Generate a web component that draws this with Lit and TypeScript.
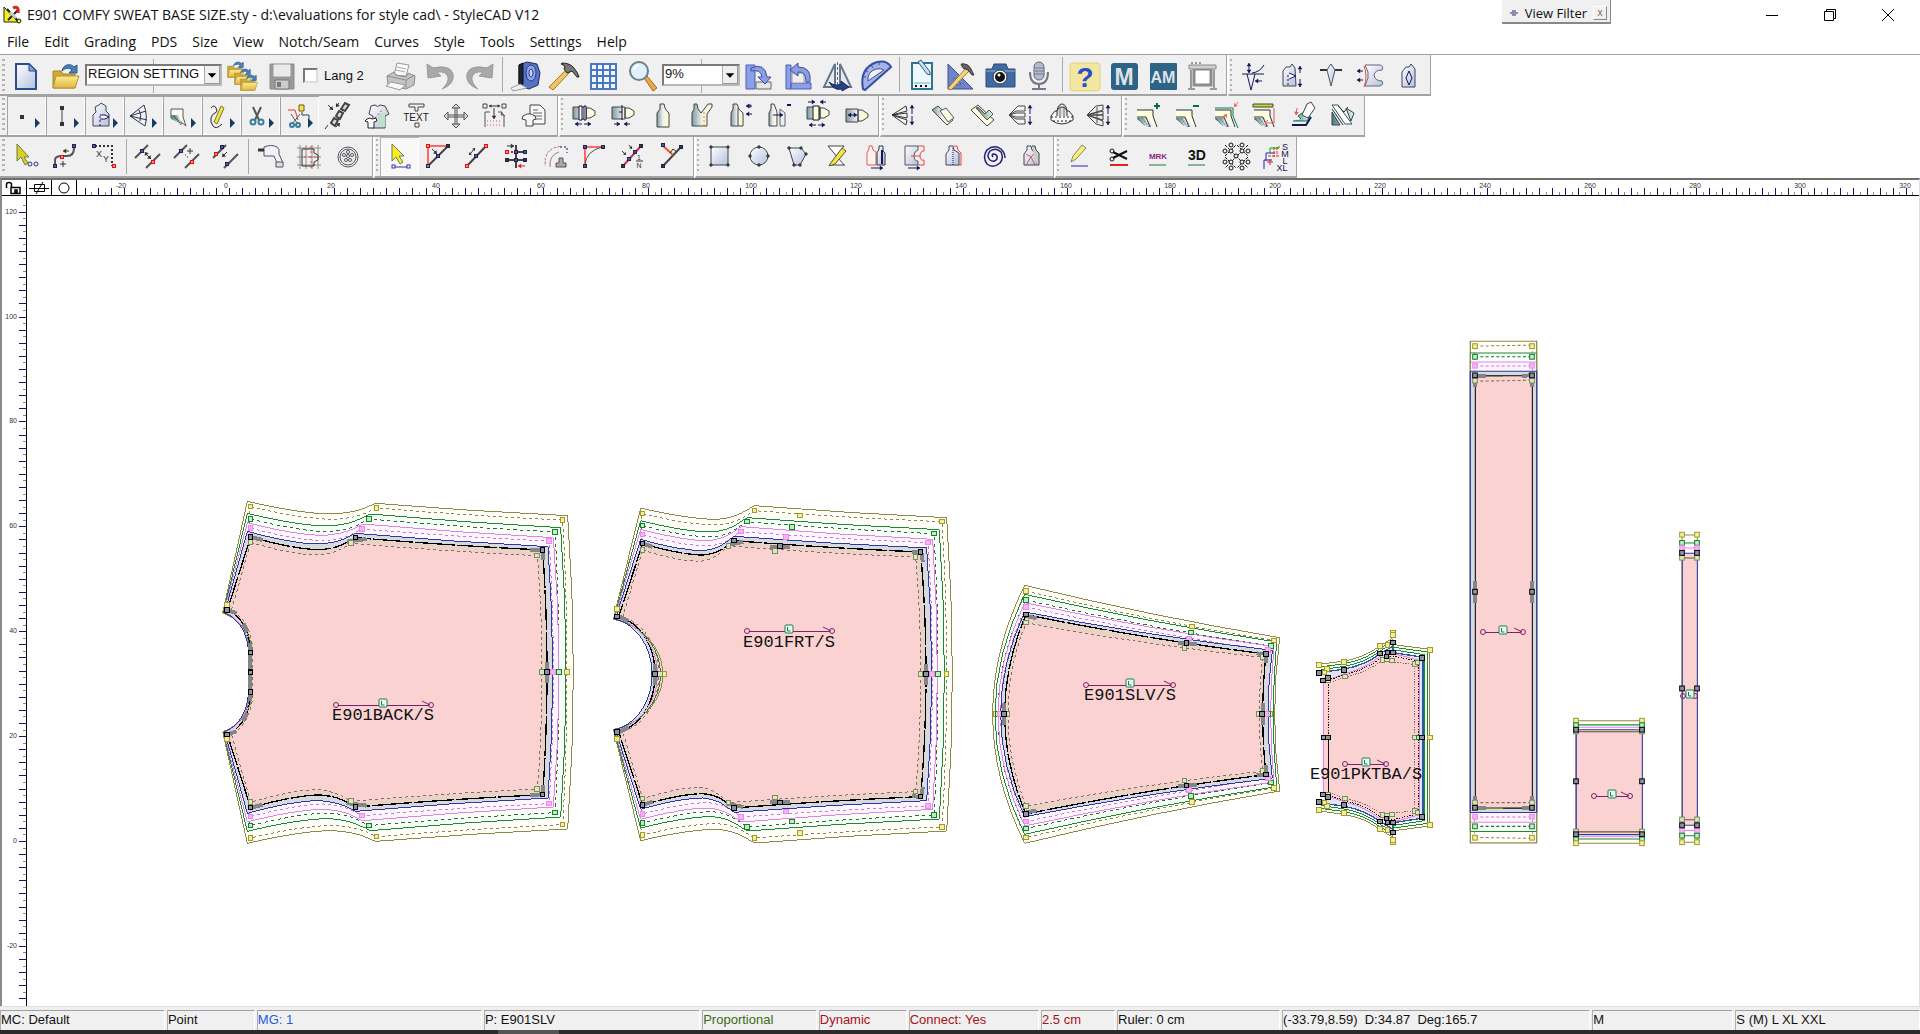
import { LitElement, html, svg, css } from "lit";
import { customElement, property } from "lit/decorators.js";

type Art = unknown;
const NAVY = "#14145a";
const INK = "#333";

/* ---------- small drawing helpers for the 39 x 39 tool icons ---------- */

const P = (d: string, stroke = INK, fill = "none", w = 1): Art =>
  svg`<path d=${d} stroke=${stroke} fill=${fill} stroke-width=${w}></path>`;

const D = (d: string, stroke = INK, dash = "2 2", w = 1): Art =>
  svg`<path d=${d} stroke=${stroke} fill="none" stroke-width=${w} stroke-dasharray=${dash}></path>`;

const arrow = (x1: number, y1: number, x2: number, y2: number, c = NAVY, s = 4): Art => {
  const a = Math.atan2(y2 - y1, x2 - x1);
  const pt = (t: number) => `${x2 - s * Math.cos(a + t)} ${y2 - s * Math.sin(a + t)}`;
  return svg`<path d="M${x1} ${y1}L${x2} ${y2}" stroke=${c} fill="none"></path>
    <path d="M${x2} ${y2}L${pt(0.65)}L${pt(-0.65)}Z" fill=${c}></path>`;
};

const sq = (x: number, y: number, c = "#4a5ab0"): Art =>
  svg`<rect x=${x - 1.5} y=${y - 1.5} width="3" height="3" fill=${c} stroke="#22224a"></rect>`;
const rsq = (x: number, y: number): Art =>
  svg`<rect x=${x - 1.5} y=${y - 1.5} width="3" height="3" fill="#f88" stroke="#d11"></rect>`;
const T = (x: number, y: number, s: string, size: number, c: string, w = "400"): Art =>
  svg`<text x=${x} y=${y} font-size=${size} fill=${c} font-weight=${w} text-anchor="middle">${s}</text>`;

const drop = svg`<path d="M28 22v10l5-5z" fill="#153a66"></path>`;
const folder = (x: number, y: number, k: number): Art => svg`<g transform="translate(${x} ${y}) scale(${k})">
  <path d="M1 8h8l2 3h12v14H1z" fill="#cfa93a" stroke="#a98626"></path>
  <path d="M1 25l3-12h23l-4 12z" fill="url(#gold)" stroke="#b7922b"></path>
  <path d="M10 8c1-7 9-8 12-4l3-2v8h-8l3-3c-3-3-7-2-10 1z" fill="#4a7fb8" stroke="#2c5c92"></path></g>`;
const vest = "M14 31V17l3-4V8h4l1 4q1 3 4 5v14z";
const pleat = "M8 11h13v12H8zM21 12h4l5 3v4l-5 3h-4z";
const seam = (extra: Art): Art => svg`
  ${P("M8 14h16v6l5 12-6-5-4-5H8z", "none", "#ffffdc")}
  ${P("M8 22h8l4 10-6-4-6-5z", "none", "url(#teal)")}
  ${P("M8 14h16v6l4 11M8 21h9l4 10", "#234")}${D("M9 23l7 7M13 22l7 9M17 22l5 9", "#456", "1 1")}${extra}`;

const ICONS: Record<string, Art> = {
  new: svg`${P("M9 8h13l7 7v18H9z", "#2d4d8c", "url(#page)", 2)}${P("M22 8v7h7z", "#2d4d8c", "#7ba0e0")}`,
  open: folder(6, 7, 1),
  openMany: svg`${folder(3, 5, 0.65)}${folder(10, 12, 0.65)}${folder(16, 18, 0.65)}`,
  save: svg`${P("M7 8h24v25H7z", "#8d8d8d", "#999")}${P("M11 9h16v11H11z", "#eee", "#e9e9e9")}${P("M12 24h14v9H12z", "#777", "#ccc")}<rect x="14" y="26" width="4" height="5" fill="#777"></rect>`,
  print: svg`${P("M12 19l3-12 12 2-3 11z", "#999", "#fafafa")}${P("M15 11l9 2M14 14l9 2", "#aaa")}${P("M5 20l7-4 2 3 10 2 2-4 7 3-1 9-8 4-18-4z", "#8c8c8c", "#c4c4c4")}${P("M5 20l19 4v8M24 24l9-5", "#8c8c8c")}${P("M4 30l5-4 14 3-5 5z", "#999", "#fafafa")}`,
  undo: P("M6 8l1 14 13-2-4-4q9-1 11 5 1 6-6 12 13-5 11-15Q29 8 12 12z", "#999", "#a8a8a8"),
  redo: P("M33 8l-1 14-13-2 4-4q-9-1-11 5-1 6 6 12Q5 28 7 18 10 8 27 12z", "#999", "#a8a8a8"),
  tape: svg`${P("M13 9l8-3 10 2 3 9-2 12-9 4-10-3z", "#1f2f66", "#5572c4")}${P("M13 9l4-2v21l-4 2z", "#111", "#223")}<ellipse cx="25" cy="17" rx="5" ry="8" fill="#8ea4e4" stroke="#2a3d86"></ellipse><ellipse cx="25" cy="17" rx="2" ry="4" fill="#c9d4f6" stroke="#2a3d86"></ellipse>${P("M14 28l-9 4 2 3 14-3z", "#99a", "#eee")}`,
  hammer: svg`${P("M22 13l3 3L8 34l-4-3z", "#a87820", "#f0c468")}${P("M17 7q8 0 12 5t5 9l-2 0-5-6-5 2-3-4 1-3-4-2z", "#222", "#777")}`,
  grid: svg`${P("M7 8h25v25H7z", "#3d68b0", "#f2f6ff")}${P("M7 14h25M7 20h25M7 27h25M13 8v25M19 8v25M26 8v25M7 8h25v25H7z", "#4a78c0", "none", 2)}`,
  zoom: svg`${P("M21 22l3-2 10 12-4 3z", "#a66c1c", "#e8a848")}<circle cx="16" cy="15" r="9" fill="#dff1fb" stroke="#6b7f8c" stroke-width="2"></circle>${P("M11 14q1-4 5-5", "#fff", "none", 2)}`,
  rotR: svg`${P("M6 9h9v24H6z", "#4b5fae", "#8aa0ea")}${P("M16 26h15v7H16z", "#666", "#e4e4e4")}${P("M11 12q14-6 16 9h4l-6 7-7-7h4q-1-8-11-6z", "#3b4f9e", "#8a9ee8")}`,
  rotL: svg`${P("M7 9h5v24H7z", "#4b5fae", "#8aa0ea")}${P("M12 27h20v6H12z", "#4b5fae", "#8aa0ea")}${P("M13 17h12v10H13z", "#999", "#eee")}${P("M31 26q2-15-12-15V7l-8 7 8 6v-4q8-1 8 10z", "#3b4f9e", "#8a9ee8")}`,
  flip: svg`${P("M17 8v23H6z", "#667788", "#e4eaf0", 2)}${P("M22 8v23h11z", "#667788", "#e4eaf0", 2)}${D("M19.500 6v28", "#4a6a9a", "3 2")}${P("M11 26q6 5 12 2v-3l8 6-7 4v-2q-8 2-13-7z", "#142a66", "#2a4088")}`,
  protractor: svg`${P("M6 33Q2 12 20 6q10-2 14 5L8 34z", "#3b4f9e", "#a3b2ea", 2)}${P("M11 25q-1-9 8-12 5-1 8 1z", "#3b4f9e", "#f0f0f0")}${P("M6 21l3 0M8 14l3 2M14 9l2 3M22 6v3", "#3b4f9e")}`,
  notes: svg`${P("M9 7h20v26H9z", "#2f7392", "#eef8fc", 2)}${P("M11 27h16", "#7ab")}${P("M12 30h2m3 0h2m3 0h2", "#111", "none", 2)}${P("M15 6l3-2 9 12v3l-3-1z", "#335577", "#c4e4f0")}`,
  draft: svg`${P("M6 8v25h25z", "#3c4f86", "#6c84c8", 1)}${P("M12 22v6h7z", "#3c4f86", "#f0f0f0")}${P("M6 32l3 2 18-19-3-3z", "#a87820", "#f0d488")}${P("M19 8q7-1 10 5t3 6h-2l-4-5-5-2z", "#333", "#666")}`,
  camera: svg`${P("M5 13h6l2-5h12l2 5h7v18H5z", "#2a4a76", "#3f6ba4")}${P("M5 15h29", "#9ab")}<circle cx="19" cy="21" r="7" fill="#fff" stroke="#223344"></circle><circle cx="19" cy="21" r="5" fill="#111"></circle><circle cx="18" cy="19" r="1.500" fill="#fff"></circle>`,
  mic: svg`<rect x="14" y="6" width="10" height="18" rx="5" fill="#b4bbd0" stroke="#666677"></rect>${P("M15 12h9M15 15h9M15 18h9", "#778")}${P("M10 16q0 12 9 12t9-12M19 28v5M12 33h14", "#778", "none", 2)}`,
  help: svg`<rect x="4" y="7" width="30" height="28" rx="3" fill="#f3e6a2" stroke="#e0d080"></rect>${T(19, 31, "?", 28, "#2a50c8", "700")}`,
  m: svg`<rect x="6" y="7" width="27" height="27" rx="3" fill="#2d6486"></rect>${T(19, 29, "M", 23, "#dfe3e6", "700")}`,
  am: svg`<rect x="6" y="7" width="27" height="27" rx="1" fill="#2d6486"></rect>${T(19, 27, "AM", 16, "#dfe3e6", "700")}`,
  plot: svg`${P("M11 13h17v16H11z", "#8c8c8c", "#fff", 3)}${P("M6 9h27v4H6z", "#8a8a8a", "#d0d0d0", 1)}${P("M8 14v18m23-18v18M5 33h7m15 0h7M8 7h2m2 0h2m2 0h2", "#9a9a9a", "none", 2)}`,

  dart1: svg`${P("M8 18h22M13 18l4 16 4-16", NAVY)}${P("M18 17q8-1 12-8", NAVY)}${arrow(15, 12, 15, 7)}${arrow(15, 12, 15, 17)}${arrow(28, 25, 21, 25)}`,
  dart2: svg`${P("M10 30V15l3-4h4l2-3 3 4 1 18z", "#445", "url(#page)")}${P("M16 17l7 3-7 3", NAVY, "#fff")}${D("M15 19v12", NAVY)}${arrow(27, 17, 27, 10)}${arrow(27, 23, 27, 31)}`,
  dart3: svg`${P("M8 14h22", "#333", "none", 2)}${P("M15 14l4 16 4-16-4-6z", "#556", "url(#page)")}`,
  dart4: svg`${P("M14 9h15q4 1 2 5-7 0-8 5 1 6 8 6 2 4-2 5H14l3-8v-6z", "#667", "url(#page)")}${P("M13 10q4 10 0 21", "#e44")}${arrow(12, 15, 6, 15)}${arrow(12, 24, 6, 24)}`,
  dart5: svg`${P("M12 31V16l4-5h3l2-3 4 5v18z", "#445", "url(#page)")}${P("M19 15l3 7-3 7-3-7z", NAVY)}`,

  point: svg`<rect x="13" y="19" width="4" height="4" fill="#333"></rect>${drop}`,
  line: svg`${P("M16 12v17", "#444", "none", 1)}<rect x="14" y="10" width="4" height="4" fill="#333"></rect><rect x="14" y="26" width="4" height="4" fill="#333"></rect>${drop}`,
  piece: svg`${P("M8 30V19l3-3-1-5 4-2 2-2 5 3v5l3 3v12z", "#445", "url(#page)")}${P("M15 19h5l4 2-4 2h-5", NAVY, "#fff")}${D("M15 20v10", NAVY)}${drop}`,
  fanDrop: svg`${P("M6 20L20 9q4 11 1 21zM6 20l16-5M6 20l17 4M15 14q3 5 1 11", "#334", "#eef2fa")}${drop}`,
  seamDrop: svg`${P("M8 13h12v8l3 9-6-5-9-3z", "#556", "#fbfbe8")}${P("M8 19h7l4 9-11-5z", "none", "url(#teal)")}${D("M11 20l8 9", "#345", "1 1", 2)}${drop}`,
  sketch: svg`${P("M9 12q3-4 5 0t-1 5-4 5 2 8 9-2", "#222")}${P("M12 26l7-16 3 2-7 16z", "#773", "#f3e63c")}${drop}`,
  cut: svg`${P("M12 11l6 13M20 11l-6 13", "#555", "none", 2)}<circle cx="12" cy="26" r="2.500" fill="none" stroke="#3a7d9c" stroke-width="2"></circle><circle cx="20" cy="26" r="2.500" fill="none" stroke="#3a7d9c" stroke-width="2"></circle>${drop}`,
  cutJoin: svg`${P("M8 14h7l3 10", "#e33")}${P("M11 18l6 9M20 18l-7 9", "#555")}<circle cx="12" cy="29" r="2" fill="none" stroke="#3a7d9c" stroke-width="2"></circle><circle cx="18" cy="29" r="2" fill="none" stroke="#3a7d9c" stroke-width="2"></circle>${P("M19 9h5v6h-5z", "#752", "#f3e63c")}${P("M22 16v3h7v4", "#345")}${drop}`,
  chain: svg`${P("M12 27l3-5 4 2-3 6zM17 20l3-5 4 2-3 6zM22 13l4-6 4 2-4 6z", "#444", "#ddd", 2)}${arrow(9, 9, 14, 14, INK)}${arrow(20, 7, 17, 11, INK)}${arrow(17, 31, 21, 27, INK)}${P("M9 29l-3 4", INK)}`,
  shirt: svg`${P("M13 10l4-1q3 3 5 0l5 1 4 8-4 2v12H15V20l-4-2z", "#445", "url(#page)")}${P("M20 31V19l7-3v15z", "none", "#bfe0cc")}${D("M17 22l8-9", "#e33")}${P("M9 23l3-1 2 1 4-1 1 3-3 1v6H10v-6l-3-1z", "#222", "#fff")}`,
  text: svg`${P("M12 8h15v3h-6v4h-3v-4h-6z", "#444")}${T(19, 25, "TEXT", 10, "#222")}${P("M18 27h4v4h-4z", "#444")}`,
  move: svg`${P("M10 19h20v2H10zM19 10h2v20h-2z", "#555", "#eee")}${P("M12 16l-4 4 4 4zM28 16l4 4-4 4zM16 12l4-4 4 4zM16 28l4 4 4-4z", "#555", "#ddd")}`,
  distribute: svg`${P("M8 8h4v4H8zM27 8h4v4h-4z", "#444")}${arrow(19, 10, 14, 10, INK, 3)}${arrow(19, 10, 25, 10, INK, 3)}${arrow(19, 12, 19, 23, INK)}${P("M10 31V16h5m8 0h4l-1 3h3v12M26 16l4 4", "#555")}${D("M12 25h14M12 29h14", "#e55", "1 2")}`,
  copyDoc: svg`${P("M16 9h10l5 5v14H16z", "#444", "#f8f8f8")}${P("M19 14h5m-5 3h9m-9 3h9m-9 3h9", "#666")}${P("M9 20l4-2h4l4 2 1 3-3 1v6h-7v-6l-4-1z", "#444", "#f8f8f8")}`,

  full1: svg`${P(pleat, "#444", "url(#mix)")}${P("M14 10h3v14h-3zM19 10h2v14h-2z", "#113", "#fff")}${arrow(17, 28, 10, 28)}${arrow(19, 28, 26, 28)}`,
  full2: svg`${P(pleat, "#444", "url(#mix)")}${P("M18 9v15M15 16h3", "#113", "none", 1)}${arrow(10, 28, 16, 28)}${arrow(26, 28, 20, 28)}`,
  vest1: P(vest, "#444", "url(#mix)"),
  vest2: svg`${P("M10 30V17l2-4V8h3l1 5 3 4 4-5 3-4h4v3l-5 7v12z", "#444", "url(#mix)")}${D("M22 16v14", "#e80")}`,
  vest3: svg`${P("M10 30V17l2-4V8h4q1 6 6 9v13z", "#444", "url(#mix)")}${P("M17 12v18", "#345")}${arrow(31, 10, 25, 10)}${arrow(31, 18, 25, 18)}${P("M29 8v4", NAVY)}`,
  vest4: svg`${P("M9 30V17l2-4V8h3l3 8v14z", "#444", "url(#mix)")}${P("M20 30V13l5 4v13z", "#567", "#eee")}${arrow(13, 19, 23, 19)}${P("M27 9h4", NAVY, "none", 2)}`,
  full3: svg`${P(pleat, "#444", "url(#mix)")}${P("M14 10h6v14h-6z", "#113", "#ffffd8")}${arrow(9, 6, 16, 6)}${arrow(27, 6, 21, 6)}${arrow(17, 29, 10, 29)}${arrow(19, 29, 26, 29)}`,
  full4: svg`${P("M8 13h12v13H8zM20 14h4l6 4v3l-6 4h-4z", "#444", "url(#mix)")}${arrow(14, 19, 10, 19)}${arrow(14, 19, 19, 19)}`,

  fan1: svg`${P("M6 19l14-9 1 5zM6 19l15-2v5zM6 19l15 5-1 5z", "#333", "#f4f6f4")}${arrow(26, 18, 26, 9)}${arrow(26, 20, 26, 29)}`,
  strip1: svg`${P("M7 14l6-4 15 14-6 5z", "#444", "url(#mix)")}${P("M15 15l6-3 8 10-6 4z", "#555", "#fafae0")}`,
  strip2: svg`${P("M7 14l7-5 16 15-7 6z", "#444", "#ffffe0")}${P("M12 12l11 12 6-6-4-4-4 4-7-7z", "#555", "url(#teal)")}`,
  fan2: svg`${P("M6 19l9-9h7v5h-9zM6 19l7-2h9v4h-9zM6 19l7 4h9v5h-7z", "#444", "#f4f6f4")}${arrow(27, 18, 27, 9)}${arrow(27, 20, 27, 29)}`,
  collar: svg`${P("M9 20l4-5 2 0q1-7 5-7t5 7h2l4 5v4q-11 8-22 0z", "#333", "#fafafa")}${P("M15 20v-5q1-4 5-4t5 4v5", "#333", "#ddd")}${D("M9 21h22M11 25h18", "#222")}${P("M18 9v11m4-11v11", "#777")}`,
  fan3: svg`${P("M6 19l9-9 7-1v5zM6 19l16-4v4zM6 19h16v5zM6 19l16 6v5l-7-2z", "#444", "#e9ecef")}${P("M16 11v16", "#555")}${arrow(27, 18, 27, 9)}${arrow(27, 20, 27, 29)}`,

  seamAdd: seam(P("M25 10h6M28 7v6", "#0a6a5a", "none", 2)),
  seamSub: seam(P("M25 10h6", "#0a6a5a", "none", 2)),
  seamIn: seam(svg`${P("M8 12h18v8l5 12", "#0a7a5a")}${arrow(31, 6, 27, 11, "#e66")}${arrow(15, 24, 20, 18, "#e66")}`),
  seamRule: seam(svg`${P("M7 8h20v3H7z", "#443", "#c8d838")}${P("M28 12v15H19l3-3m-3 3l3 3", "#e55")}`),
  fold: svg`${P("M8 25h14l3-5-8-3-4 3 3 3", "#0a7a5a", "url(#teal)")}${P("M17 19l5-11 4-2 4 6-7 10z", "#444", "#fafafa")}${arrow(12, 12, 11, 19, "#e55")}${P("M7 29h14l5-8", NAVY, "none", 2)}`,
  bias: svg`${P("M8 9h6l14 19h-7z", "#335555", "#fff")}${P("M8 13l11 16M14 10l6 6 4-5", "#234")}${P("M8 16v13h8zM22 12l8 5-3 8z", "#345", "url(#teal)")}`,

  pick: svg`${P("M10 7v17l4-4 4 8 3-2-4-6h5z", "#775", "#d6d022")}<circle cx="23" cy="27" r="2" fill="#ccffee" stroke="#333366"></circle><circle cx="29" cy="27" r="2" fill="#ccffee" stroke="#333366"></circle>`,
  addCurve: svg`${P("M9 29v-6q0-4 7-4h5q7 0 7-8", "#555", "none", 2)}${sq(9, 29)}${rsq(16, 20)}${sq(28, 9)}${P("M14 27h6M17 24v6", INK)}${arrow(23, 14, 17, 14, INK)}`,
  xy: svg`${D("M10 9h17v20", INK, "2 2", 2)}${sq(9, 9)}${rsq(29, 29)}${T(14, 20, "X", 9, INK)}${T(21, 25, "Y", 9, INK)}`,
  par1: svg`${P("M6 21L19 8M17 31l14-14", "#555", "none", 2)}${sq(13, 14)}${rsq(24, 25)}${arrow(18, 18, 16, 15, INK)}${arrow(18, 18, 22, 22, INK)}`,
  par2: svg`${P("M6 21L19 8M17 31l14-14", "#555", "none", 2)}${sq(13, 14)}${rsq(24, 25)}${P("M19 14h6M22 11v6M17 18h1M19 20h1", INK)}`,
  par3: svg`${P("M6 21L19 8M17 31l14-14", "#555", "none", 2)}${rsq(9, 17)}${sq(15, 10)}${sq(20, 27)}${arrow(20, 15, 15, 20, INK)}`,
  drill: svg`${P("M13 10q8-3 13 0 3 2 2 7l4 9h-6l-3-7h-10z", "#555", "#eef2f8")}${P("M7 13h6", "#333", "none", 3)}${P("M25 25h7v5h-7z", "#555", "#dde")}`,
  lattice: svg`${P("M7 11h24M7 20h24M7 28h24M10 8v24M16 8v24M22 8v24M28 8v24", "#998a88")}${P("M12 12h12v4l4 2v5l-4 2v4H12z", "#333", "none", 1)}${D("M21 9v22M14 20h15", "#e44", "2 3")}`,
  target: svg`<circle cx="19" cy="20" r="10" fill="#f4f4f4" stroke="#555"></circle><circle cx="19" cy="20" r="8" fill="#e4e8f0" stroke="#555"></circle>${[[19, 15], [15, 18], [23, 18], [17, 23], [21, 23], [19, 19]].map(([x, y]) => svg`<circle cx=${x} cy=${y} r="1.500" fill="#fff" stroke="#555"></circle>`)}`,

  select: svg`${P("M12 7v17l4-4 4 7 3-2-4-6h5z", "#775", "#f6ee22")}${P("M14 30h15", "#33a")}<rect x="12" y="28" width="3" height="3" fill="#fff" stroke="#3333aa"></rect><rect x="27" y="28" width="3" height="3" fill="#fff" stroke="#3333aa"></rect>`,
  tri: svg`${P("M9 29V9h20", "#f66", "none", 2)}${P("M9 29L29 9", "#444", "none", 2)}${rsq(9, 9)}${sq(29, 9, "#333")}${sq(9, 29, "#888")}${sq(19, 19)}${arrow(13, 12, 18, 17, INK)}`,
  seg: svg`${P("M9 29L28 9", "#444", "none", 2)}${rsq(9, 29)}${rsq(28, 9)}${sq(18, 19)}${arrow(13, 16, 11, 18, INK, 3)}${arrow(13, 16, 17, 11, INK, 3)}`,
  align: svg`${P("M19 8v23M20 15h8M10 23h9M20 23h8", "#444", "none", 2)}${D("M10 15h9", "#d22", "2 2", 2)}${rsq(10, 15)}${sq(19, 15)}${sq(28, 15)}${sq(10, 23, "#333")}${sq(19, 23)}${sq(28, 23, "#333")}${arrow(10, 9, 17, 9, INK)}${arrow(28, 29, 21, 29, "#d22")}`,
  arc: svg`${P("M9 29q-2-18 16-20M14 30q-1-12 9-15", "#a77")}${D("M9 29q-2-18 16-20", "#fff")}${D("M24 10h7v6", NAVY)}${P("M20 26h3v-5h4v5h3v4H20z", "#555", "#aaa")}`,
  corner: svg`${P("M10 29V10h18", "#f66", "none", 2)}${P("M10 28Q11 14 27 10", "#555")}${sq(10, 10)}${sq(28, 10, "#555")}${sq(10, 29, "#555")}`,
  split: svg`${P("M9 29L27 9", "#c33", "none", 2)}${sq(27, 9, "#333")}${sq(21, 15)}${sq(15, 22)}${sq(9, 29, "#333")}${T(25, 23, "1", 7, INK)}${P("M22 24h7", INK)}${T(25, 31, "N", 7, INK)}${arrow(8, 14, 12, 18, INK, 3)}${arrow(15, 8, 18, 12, INK, 3)}`,
  perp: svg`${P("M10 29L28 10", "#444", "none", 2)}${P("M9 8l11 10", "#e52", "none", 2)}${sq(10, 8)}${sq(28, 10, "#333")}${sq(10, 29, "#333")}${P("M17 16l3-4 4 3", INK)}`,

  rect: svg`${P("M10 10h17v18H10z", "#444", "url(#page)")}${[[10, 10], [27, 10], [10, 28], [27, 28]].map(([x, y]) => P(`M${x - 1} ${y - 1}h2v2h-2z`, "#223", "#88a"))}`,
  circle: svg`<circle cx="19" cy="19" r="9" fill="url(#page)" stroke="#444"></circle>${[[19, 10], [10, 19], [28, 19], [19, 28]].map(([x, y]) => P(`M${x - 1} ${y - 1}h2v2h-2z`, "#223", "#88a"))}`,
  poly: svg`${P("M10 11h12l5 6-6 11h-6z", "#444", "url(#page)")}${[[10, 11], [22, 11], [27, 17], [21, 28], [15, 28]].map(([x, y]) => P(`M${x - 1} ${y - 1}h2v2h-2z`, "#223", "#88a"))}`,
  pencilZ: svg`${P("M10 9h16L12 28h15M10 9l16 19", "#444", "#fff")}${P("M12 27L24 11l4 3-11 13-6 2z", "#553", "#f3e63c")}`,
  pair: svg`${P("M10 28V16l2-4V9h3l1 4 3 2v13z", "#e55", "#fff4f4")}${P("M20 28V16l2-4V9h4v5l2 2v12z", "#334", "url(#page)")}${P("M25 13v14", NAVY, "none", 2)}${arrow(14, 31, 26, 31)}`,
  match: svg`${P("M9 9h13v4q-4 1-4 6t4 5v4H9z", "#556", "url(#page)")}${P("M22 9h6v5q-4 0-4 5t4 4v5h-6", "#e44")}${arrow(12, 31, 24, 31)}${P("M15 19h9", "#e44")}`,
  vestR: svg`${P("M11 28V17l3-4V9h4l1 4 5 3v12z", "#445", "url(#page)")}${P("M19 9h3l1 4 3 3v12h-3", "#e44")}${D("M18 11v17", NAVY, "1 1")}`,
  spiral: svg`<path d="M19 20q-2-3 1-3 4 1 3 5-3 4-7 1-4-4 0-9 6-4 11 1 3 6-1 11-7 6-13 1-5-7 0-14 7-6 14-1 4 4 4 9" fill="none" stroke="#22227a" stroke-width="1.500"></path>`,
  vestC: svg`${P("M11 28V17l3-4V9h4l1 4 5 3v12z", "#445", "url(#page)")}${P("M13 28l5-8-5-3M18 20l5-5M18 20l4 8", "#d55")}${P("M19 9h3l1 4 3 3v12h-2", "#444", "#ccc")}`,

  pencil: svg`${P("M10 25l2-6L21 8l4 3-10 11z", "#885", "#f6ef7c")}${P("M10 29h17", "#22b")}`,
  scissors: svg`${P("M13 15l14 7M13 21l14-7", "#111", "none", 2)}<circle cx="12" cy="14" r="2" fill="none" stroke="#111"></circle><circle cx="12" cy="22" r="2" fill="none" stroke="#111"></circle>${P("M10 28h18", "#d22", "none", 2)}`,
  mrk: svg`${T(19, 22, "MRK", 8, "#8a1f8a", "700")}${P("M10 28h17", "#1a7a3a", "none", 1)}`,
  d3: svg`${T(19, 23, "3D", 14, "#111", "700")}${P("M10 28h17", "#1a7a3a", "none", 1)}`,
  lace: svg`${D("M8 8l23 23M31 8L8 31M8 20l11 11M20 8l11 11M8 19L19 8M31 20L20 31", "#111", "3 1", 1)}${[[8, 14], [8, 25], [14, 8], [25, 8], [31, 14], [31, 25], [14, 31], [25, 31], [14, 14], [25, 14], [14, 25], [25, 25], [19, 19]].map(([x, y]) => svg`<circle cx=${x} cy=${y} r="2" fill="#f0f0f0" stroke="#111"></circle>`)}`,
  sizes: svg`${P("M8 32V23h8M10 24v-8h9", "#22a")}${P("M14 16v-5h9V9", "#0a0")}${D("M18 10v10M21 10v8M12 19h12", "#d22", "3 1")}${P("M11 25h6m-3-3v6", "#c22")}${T(29, 13, "S", 9, NAVY)}${T(29, 20, "M", 9, NAVY)}${T(29, 27, "L", 9, NAVY)}${T(26, 34, "XL", 9, NAVY)}`,
};

type Item = string | { icon: string; on?: boolean; boxed?: boolean };
const boxed = (icon: string): Item => ({ icon, boxed: true });

const ROW1A: Item[] = ["new", "open", "#region", "openMany", "save", "#lang", "print", "undo", "redo", "|", "tape", "hammer", "grid", "zoom", "#zoom", "rotR", "rotL", "flip", "protractor", "|", "notes", "draft", "camera", "mic", "|", "help", "m", "am", "plot"];
const ROWS: Item[][][] = [
  [ROW1A, ["dart1", "dart2", "dart3", "dart4", "dart5"]],
  [
    [...["point", "line", "piece", "fanDrop", "seamDrop", "sketch", "cut", "cutJoin"].map(boxed), "chain", "shirt", "text", "move", "distribute", "copyDoc"],
    ["full1", "full2", "vest1", "vest2", "vest3", "vest4", "full3", "full4"],
    ["fan1", "strip1", "strip2", "fan2", "collar", "fan3"],
    ["seamAdd", "seamSub", "seamIn", "seamRule", "fold", "bias"],
  ],
  [
    ["pick", "addCurve", "xy", "|", "par1", "par2", "par3", "|", "drill", "lattice", "target"],
    [{ icon: "select", on: true }, "tri", "seg", "align", "arc", "corner", "split", "perp"],
    ["rect", "circle", "poly", "pencilZ", "pair", "match", "vestR", "spiral", "vestC"],
    ["pencil", "scissors", "mrk", "d3", "lace", "sizes"],
  ],
];

@customElement("tool-rows")
export class ToolRows extends LitElement {
  static styles = css`
    :host { display: block; background: #fff; font: 13px "Liberation Sans", Arial, sans-serif; }
    .defs { position: absolute; }
    .row { display: flex; height: 41px; }
    .bar { display: flex; align-items: center; background: #f0f0f0; border-bottom: 2px solid #a3a3a3; border-right: 1px solid #a3a3a3; padding-right: 1px; box-sizing: border-box; }
    .bar + .bar { border-left: 1px solid #fff; margin-left: 1px; }
    .bar:first-child { padding-right: 4px; }
    .main .bar { padding-top: 2px; }
    .grip { width: 3px; align-self: stretch; margin: 2px 2px 2px 2px; background: repeating-linear-gradient(#b4b4b4 0 2px, #f0f0f0 2px 5px); }
    .bar + .bar .grip { margin: 2px 2px 2px 1px; width: 2px; }
    .tool { width: 39px; height: 39px; padding: 0; border: 0; background: none; flex: none; display: block; box-sizing: border-box; }
    .tool svg { display: block; font-family: "Liberation Sans", Arial, sans-serif; }
    .boxed { box-shadow: inset 1px 1px #a3a3a3, inset -1px -1px #fff; }
    .on { background: #f8f8f8; box-shadow: inset 1px 1px #b4b4b4, inset -1px -1px #fff; }
    .sep { width: 1px; margin: 2px 2px; align-self: stretch; background: #a9a9a9; flex: none; }
    .main .sep { margin: 0 3px 2px; }
    .combo { display: grid; align-items: center; height: 39px; flex: none; padding-bottom: 2px; box-sizing: border-box; background: linear-gradient(#a9a9a9, #a9a9a9) center / 1px 34px no-repeat; }
    .region { width: 137px; margin-right: 2px; }
    .percent { width: 78px; }
    .combo > * { grid-area: 1 / 1; }
    select { appearance: none; width: 100%; height: 22px; border: 2px solid; border-color: #7a7a7a #b8b8b8 #b8b8b8 #7a7a7a; border-radius: 0; background: #fff; color: #111; font: inherit; padding: 0 18px 2px 1px; box-sizing: border-box; }
    .knob { justify-self: end; width: 16px; height: 18px; margin-right: 2px; background: #f0f0f0; border-left: 1px solid #aaa; box-shadow: inset -1px -1px #999; pointer-events: none; box-sizing: border-box; }
    .lang { display: flex; align-items: center; gap: 6px; width: 80px; padding-left: 1px; color: #111; flex: none; box-sizing: border-box; }
    .lang input { appearance: none; width: 15px; height: 15px; margin: 0; background: #fff; border: 2px solid; border-color: #777 #ddd #ddd #777; }
  `;

  private item(it: Item) {
    if (it === "|") return html`<span class="sep"></span>`;
    if (it === "#region") return this.combo("region", "Region", "REGION SETTING");
    if (it === "#zoom") return this.combo("percent", "Zoom", "9%");
    if (it === "#lang") return html`<label class="lang"><input type="checkbox" />Lang 2</label>`;
    const o = typeof it === "string" ? { icon: it } : it;
    const cls = `tool ${"boxed" in o && o.boxed ? "boxed" : ""} ${"on" in o && o.on ? "on" : ""}`;
    return html`<button class=${cls} aria-label=${o.icon}><svg width="39" height="39" viewBox="0 0 39 39">${ICONS[o.icon]}</svg></button>`;
  }

  private combo(cls: string, label: string, value: string) {
    return html`<div class="combo ${cls}">
      <select aria-label=${label}><option>${value}</option></select>
      <svg class="knob" viewBox="0 0 16 18"><path d="M3 7h9l-4.500 5z" fill="#000"></path></svg>
    </div>`;
  }

  render() {
    return html`
      <svg class="defs" width="0" height="0">
        <defs>
          <linearGradient id="page" x1="0" y1="0" x2="1" y2="1"><stop offset="0" stop-color="#fff"></stop><stop offset="1" stop-color="#b3c0dc"></stop></linearGradient>
          <linearGradient id="gold" x1="0" y1="0" x2="0" y2="1"><stop offset="0" stop-color="#fbeb94"></stop><stop offset="1" stop-color="#e0b840"></stop></linearGradient>
          <linearGradient id="mix"><stop offset="0" stop-color="#7f9ba4"></stop><stop offset=".5" stop-color="#eef2ee"></stop><stop offset="1" stop-color="#ffffd0"></stop></linearGradient>
          <linearGradient id="teal"><stop offset="0" stop-color="#4f8078"></stop><stop offset="1" stop-color="#e8f2ee"></stop></linearGradient>
        </defs>
      </svg>
      ${ROWS.map((bars, n) => html`<div class="row ${n === 0 ? "main" : ""}">${bars.map((b) => html`<div class="bar"><span class="grip"></span>${b.map((i) => this.item(i))}</div>`)}</div>`)}
    `;
  }
}

/* ---------- pattern pieces ---------- */

interface Layer { color: string; fill: string; dash: string; w: number; mark: string; edge: string; }
const L = (color: string, fill: string, dash = "", w = 3, mark = "", edge = color): Layer => ({ color, fill, dash, w, mark, edge });
const LAYERS: Layer[] = [
  L("#8f8a48", "#fffef9"),
  L("#8a8450", "none", "9 9", 3, "#f6ee98", "#a09a30"),
  L("#1c8a34", "#f8fff8"),
  L("#30663a", "none", "10 10", 3, "#b4f6b4", "#1c7a34"),
  L("#e583e5", "#fef6fe"),
  L("#c07fc6", "none", "9 9", 3, "#f6b4f4", "#ee88ee"),
  L("#2b38a8", "#d6dade"),
  L("#000", "#ead2c8", "120 6", 4, "#8f93a0", "#000"),
  L("#8a6a58", "#fad2d2", "9 9", 3, "#dbe8c4", "#7d8a5c"),
];

type Pt = [number, number];
const mark = (x: number, y: number, fill: string, edge: string) =>
  svg`<rect x=${x - 7} y=${y - 7} width="14" height="14" fill=${fill} stroke=${edge} stroke-width="3"></rect>`;
const stroke = (d: string, l: Layer) =>
  svg`<path d=${d} fill=${l.fill} stroke=${l.color} stroke-width=${l.w} stroke-dasharray=${l.dash || "none"}></path>`;
const shade = (cy: number, lines: number[][]) =>
  lines.map(([a, b, c, d]) => svg`<path d="M${a} ${b}L${c} ${d}M${a} ${2 * cy - b}L${c} ${2 * cy - d}" stroke="#858585" stroke-width="12"></path>`);

/* Each row: top-left, waist and top-right corners, then the hem bulge,
   the shoulder tip and the depth of the neck. */
interface Body { cy: number; dip: number; flat: number; bend: number; rows: number[][]; side: Pt[]; neckMarks: Pt[]; shades: number[][]; }

const bodyPath = (b: Body, r: number[]) => {
  const [lx, ly, wx, wy, rx, ry, mx, sx, sy, nx] = r;
  const m = (y: number) => 2 * b.cy - y;
  const w = wx - lx;
  const dy = ly + b.dip;
  const a = lx + w * 0.25, c = lx + w * 0.5, e = lx + w * 0.66, f = lx + w * 0.85, g = lx + w * 0.92;
  const hx = (wx + rx) / 2, hy = (wy + ry) / 2 + 5;
  const ny = b.cy - b.flat;
  return `M${lx} ${ly}C${a} ${ly + b.dip * 0.6} ${c} ${dy} ${e} ${dy}C${f} ${dy - 4} ${g} ${wy + 14} ${wx} ${wy}
    Q${hx} ${hy} ${rx} ${ry}Q${mx} ${(ry + b.cy) / 2} ${mx} ${b.cy}Q${mx} ${m((ry + b.cy) / 2)} ${rx} ${m(ry)}
    Q${hx} ${m(hy)} ${wx} ${m(wy)}C${g} ${m(wy + 14)} ${f} ${m(dy - 4)} ${e} ${m(dy)}C${c} ${m(dy)} ${a} ${m(ly + b.dip * 0.6)} ${lx} ${m(ly)}
    L${sx} ${m(sy)}C${sx + (nx - sx) * 0.65} ${m(sy + 20)} ${nx} ${m(sy + b.bend)} ${nx} ${m(ny)}L${nx} ${ny}C${nx} ${sy + b.bend} ${sx + (nx - sx) * 0.65} ${sy + 20} ${sx} ${sy}Z`;
};

const BACK: Body = {
  cy: 547, dip: 38, flat: 60, bend: 70,
  rows: [
    [112, 34, 496, 40, 1073, 77, 1090, 38, 369, 126],
    [122, 50, 500, 54, 1058, 90, 1071, 44, 352, 129],
    [112, 70, 480, 72, 1052, 113, 1068, 40, 367, 119],
    [122, 87, 477, 87, 1035, 126, 1047, 46, 354, 124],
    [112, 98, 458, 102, 1030, 143, 1047, 42, 366, 117],
    [122, 114, 456, 117, 1017, 153, 1030, 48, 356, 122],
    [112, 124, 436, 130, 1014, 170, 1028, 44, 368, 115],
    [122, 141, 437, 143, 998, 180, 1011, 52, 360, 121],
    [122, 157, 423, 160, 982, 197, 996, 64, 362, 128],
  ],
  side: [],
  neckMarks: [[122, 488], [122, 546]],
  shades: [[122, 141, 158, 150], [410, 155, 470, 147], [960, 179, 998, 181], [998, 183, 1000, 210], [1011, 515, 1011, 577], [50, 360, 80, 370], [121, 460, 121, 547], [100, 400, 112, 425]],
};
const FRONT: Body = {
  cy: 553, dip: 34, flat: 4, bend: 95,
  rows: [
    [122, 54, 464, 47, 1040, 83, 1057, 40, 388, 188],
    [128, 71, 464, 62, 1026, 95, 1040, 46, 364, 192],
    [122, 92, 442, 83, 1018, 119, 1033, 42, 386, 181],
    [128, 107, 441, 95, 1002, 131, 1014, 48, 366, 185],
    [122, 118, 424, 110, 998, 148, 1012, 44, 384, 172],
    [128, 134, 423, 125, 984, 158, 997, 50, 370, 177],
    [122, 148, 403, 139, 980, 174, 995, 46, 387, 156],
    [128, 161, 402, 152, 962, 186, 978, 56, 380, 165],
    [128, 180, 386, 168, 947, 201, 962, 68, 382, 176],
  ],
  side: [[600, 77], [576, 111], [558, 141], [540, 168], [526, 183]],
  neckMarks: [],
  shades: [[128, 161, 158, 171], [378, 166, 430, 155], [510, 170, 570, 170], [935, 187, 962, 186], [966, 190, 968, 215], [978, 522, 978, 580], [54, 378, 86, 393], [165, 522, 165, 553]],
};

const body = (b: Body) => {
  const m = (y: number) => 2 * b.cy - y;
  let k = 0;
  return svg`${LAYERS.map((l, i) => stroke(bodyPath(b, b.rows[i]), l))}
    ${[0, 2, 4, 6].map((i) => {
      const [, , , , , , , sx, sy, nx] = b.rows[i];
      const ny = b.cy - b.flat;
      return svg`<path fill="none" stroke=${LAYERS[i].color} stroke-width="3" d="M${b.rows[i][0]} ${b.rows[i][1]}L${sx} ${sy}C${sx + (nx - sx) * 0.65} ${sy + 20} ${nx} ${sy + b.bend} ${nx} ${ny}V${m(ny)}C${nx} ${m(sy + b.bend)} ${sx + (nx - sx) * 0.65} ${m(sy + 20)} ${sx} ${m(sy)}L${b.rows[i][0]} ${m(b.rows[i][1])}"></path>`;
    })}
    ${shade(b.cy, b.shades)}
    ${[1, 3, 5, 8, 7].map((i) => {
      const r = b.rows[i], l = LAYERS[i];
      const side = b.side[[0, 1, 2, 4, 3][k++]];
      const pts: Pt[] = [[r[0], r[1]], [r[2], r[3]], [r[4], r[5]]];
      if (side) pts.push(side);
      if (i === 1) pts.push([51, r[8] - 6]);
      if (i === 7) pts.push([51, r[8]], ...b.neckMarks);
      if (b === FRONT) pts.push([i === 7 ? 165 : i === 1 ? 193 : 180, b.cy]);
      return svg`${pts.map(([x, y]) => svg`${mark(x, y, l.mark, l.edge)}${mark(x, m(y), l.mark, l.edge)}`)}${mark(r[6], b.cy, l.mark, l.edge)}`;
    })}`;
};

const SLV = [
  [134, 46, 899, 203, 38, 884], [138, 63, 882, 212, 48, 872], [134, 73, 890, 216, 45, 880], [138, 90, 873, 228, 54, 867],
  [134, 98, 882, 230, 54, 872], [138, 111, 864, 240, 62, 860], [134, 126, 877, 241, 62, 864], [138, 134, 858, 252, 74, 848], [138, 158, 848, 262, 84, 838],
];
const SLV_MID: Pt[] = [[636, 170], [633, 188], [627, 206], [614, 234], [620, 219]];
const sleeve = () => {
  const cy = 433;
  const m = (y: number) => 2 * cy - y;
  return svg`${LAYERS.map((l, i) => {
    const [lx, ly, rx, ry, mx, hx] = SLV[i];
    const qx = (lx + rx) / 2, qy = (ly + ry) / 2 + 14;
    const bow = 2 * mx - lx;
    return stroke(`M${lx} ${ly}Q${qx} ${qy} ${rx} ${ry}Q${2 * hx - rx} ${cy} ${rx} ${m(ry)}Q${qx} ${m(qy)} ${lx} ${m(ly)}Q${bow} ${cy} ${lx} ${ly}Z`, l);
  })}
  ${shade(cy, [[138, 138, 170, 145], [595, 218, 650, 222], [830, 250, 858, 254], [860, 254, 858, 280], [72, 400, 72, 433], [850, 400, 850, 433]])}
  ${[1, 3, 5, 8, 7].map((i, k) => {
    const [lx, ly, rx, ry, mx, hx] = SLV[i], l = LAYERS[i];
    const pts: Pt[] = [[lx, ly], SLV_MID[k], [rx, ry]];
    return svg`${pts.map(([x, y]) => svg`${mark(x, y, l.mark, l.edge)}${mark(x, m(y), l.mark, l.edge)}`)}${mark(mx - 1, cy, l.mark, l.edge)}${mark(hx - 2, cy, l.mark, l.edge)}`;
  })}`;
};

const pocket = () => {
  const cy = 383;
  const m = (y: number) => 2 * cy - y;
  const edge = (o: number, x: number) =>
    `M${88 + o * 0.4} ${163 + o}L163 ${153 + o}Q225 ${142 + o} 272 ${106 + o}L306 ${86 + o}L312 ${104 + o}L${x} ${118 + o}V${m(118 + o)}L312 ${m(104 + o)}L306 ${m(86 + o)}L272 ${m(106 + o)}Q225 ${m(142 + o)} 163 ${m(153 + o)}L${88 + o * 0.4} ${m(163 + o)}`;
  const olive: Pt[] = [[87, 165], [111, 177], [162, 157], [270, 108], [293, 106], [310, 68], [310, 75], [420, 120], [104, 188]];
  const pale: Pt[] = [[165, 200], [278, 150], [291, 148], [306, 152], [375, 163], [383, 158], [115, 212]];
  const dark: Pt[] = [[87, 189], [99, 212], [114, 204], [162, 180], [270, 131], [293, 128], [310, 98], [309, 128], [290, 140], [396, 144]];
  const both = (pts: Pt[], f: string, e: string) => pts.map(([x, y]) => svg`${mark(x, y, f, e)}${mark(x, m(y), f, e)}`);
  return svg`
    <path d=${edge(0, 420)} fill="#fffef6" stroke="#8f8a48" stroke-width="3"></path>
    <path d=${edge(8, 413)} fill="#f4fff4" stroke="#1c8a34" stroke-width="3"></path>
    <path d=${edge(16, 404)} fill="#fdf0fd" stroke="#1c8a34" stroke-width="3"></path>
    <path d=${edge(24, 399)} fill="#dfe6ee" stroke="#2b5aa0" stroke-width="4"></path>
    <path d="M101 215V552" stroke="#3b38a8" stroke-width="4"></path>
    <path d="M101 212Q140 202 165 190Q225 176 272 138L310 130L390 152V614L310 636L272 628Q225 590 165 576L101 554Z" fill="#fad2d2" stroke="#e583e5" stroke-width="3"></path>
    <path d="M115 210L165 194Q225 180 275 143L310 138L385 154V612L310 628L275 623Q225 586 165 572L115 556Z" fill="none" stroke="#111" stroke-width="3" stroke-dasharray="4 4"></path>
    <path d="M115 384V560" stroke="#111" stroke-width="3"></path>
    <path d="M120 218L165 202Q225 188 278 152L375 164V602L278 614Q225 578 165 564L120 548" fill="none" stroke="#8a6a58" stroke-width="3" stroke-dasharray="4 4"></path>
    ${both(olive, "#f6ee98", "#a09a30")}${both(pale, "#dbe8c4", "#7d8a5c")}${both(dark, "#8f93a0", "#000")}
    ${mark(102, cy, "#8f93a0", "#000")}${mark(115, cy, "#8f93a0", "#000")}${mark(375, cy, "#dbe8c4", "#7d8a5c")}${mark(386, cy, "#b4f6b4", "#1c7a34")}${mark(420, cy, "#f6ee98", "#a09a30")}${mark(397, cy, "#8f93a0", "#000")}`;
};

const box = (x: number, y: number, x2: number, y2: number, c: string, fill = "none", dash = "none", w = 3) =>
  svg`<path d="M${x} ${y}H${x2}V${y2}H${x}Z" stroke=${c} fill=${fill} stroke-dasharray=${dash} stroke-width=${w}></path>`;
const marks = (xs: number[], rows: [number, number][]) =>
  rows.map(([y, i]) => xs.map((x) => mark(x, y, LAYERS[i].mark, LAYERS[i].edge)));

const bands = () => svg`
  ${box(61, 62, 260, 1520, "#8f8a48", "#fffef9")}
  ${box(61, 96, 260, 1487, "#1c8a34", "#f8fff8")}
  ${box(61, 122, 260, 1460, "#e583e5", "#fef6fe")}
  ${box(61, 149, 260, 1432, "#2b38a8", "#d6dade")}
  <path d="M61 62V1520M260 60V1520" stroke="#8f8a48" stroke-width="3"></path><path d="M61 149V1432M260 147V1432" stroke="#2b38a8" stroke-width="3"></path>
  ${box(76, 162, 247, 1419, "#000", "#fad2d2", "none", 3)}
  <path d="M76 164H160M76 1419H160" stroke="#7d8a5c" stroke-width="4"></path>
  <path d="M75 76V162M247 73V160M75 1418V1505M247 1419V1507" stroke="#8a8450" stroke-width="2" stroke-dasharray="7 10"></path>
  <path d="M75 76L246 73M75 1504L246 1507" stroke="#8a8450" stroke-width="3" stroke-dasharray="9 7"></path>
  <path d="M75 107H246M75 1472H246" stroke="#1c6a34" stroke-width="3" stroke-dasharray="9 7"></path>
  <path d="M75 134H246M75 1445H246" stroke="#d070d0" stroke-width="3" stroke-dasharray="9 7"></path>
  <path d="M75 178L246 175M75 1403H246" stroke="#8a6a58" stroke-width="3" stroke-dasharray="9 7"></path>
  <path d="M76 162l32 1M246 160l-30 3M75 165v30M246 165v30M75 758v66M246 758v66M76 1418h32M246 1419h-30M75 1385v30M246 1385v30" stroke="#858585" stroke-width="11"></path>
  ${marks([75, 246], [[76, 1], [107, 3], [133, 5], [176, 8], [161, 7], [790, 7], [1403, 8], [1418, 7], [1444, 5], [1472, 3], [1505, 1]])}

  ${box(378, 1165, 577, 1521, "#8f8a48", "#fffef9")}
  ${box(378, 1177, 577, 1509, "#1c8a34")}
  ${box(378, 1184, 577, 1502, "#e583e5")}
  ${box(379, 1191, 577, 1496, "#2b38a8", "#fad2d2")}
  <path d="M379 1197H577M379 1488H577" stroke="#555a30" stroke-width="3"></path>
  ${marks([378, 576], [[1165, 1], [1178, 3], [1196, 8], [1191, 7], [1341, 7], [1487, 8], [1509, 3], [1521, 1], [1495, 7]])}

  ${box(696, 625, 742, 1518, "#8f8a48", "#fffef9")}
  ${box(697, 648, 742, 1499, "#1c8a34", "#f8fff8")}
  ${box(697, 663, 742, 1484, "#e583e5", "#fef6fe")}
  ${box(697, 678, 742, 1469, "#2b38a8", "#fad2d2")}
  <path d="M697 692H742M697 1453H742" stroke="#555a30" stroke-width="3"></path>
  ${marks([696, 741], [[624, 1], [648, 3], [663, 5], [691, 8], [677, 7], [1071, 7], [1452, 8], [1485, 5], [1469, 7], [1499, 3], [1518, 1]])}`;

const grain = (x1: number, x2: number, y: number, bx: number) => svg`
  <path d="M${x1 + 2} ${y + 0.5}H${x2 - 2}${x2 - x1 > 20 ? `M${x2 - 9} ${y - 4}L${x2 - 1} ${y}` : ""}" stroke="#7c1f6e" fill="none"></path>
  <circle cx=${x1} cy=${y} r="2.500" stroke="#7c1f6e" fill="none"></circle>
  <circle cx=${x2} cy=${y} r="2.500" stroke="#7c1f6e" fill="none"></circle>
  <rect x=${bx - 4} y=${y - 6} width="8" height="8" rx="1" fill="#e9fff4" stroke="#1c7a50"></rect>
  <path d="M${bx - 1.5} ${y - 4}v4h3" stroke="#1c7a50" fill="none"></path>`;

const NAMES: [string, number, number][] = [["E901BACK/S", 383, 720], ["E901FRT/S", 789, 647], ["E901SLV/S", 1130, 700], ["E901PKTBA/S", 1366, 779]];

@customElement("drawing-board")
export class DrawingBoard extends LitElement {
  static styles = css`
    :host { display: flex; flex-direction: column; background: #fff; border-left: 2px solid #8a8a8a; border-top: 2px solid #6e6e6e; border-right: 1px solid #e0e0e0; }
    .top { display: flex; height: 16px; flex: none; border-bottom: 1px solid #000; box-sizing: border-box; }
    .corner { width: 25px; height: 15px; padding: 0; border: 0; border-right: 1px solid #000; background: #fff; flex: none; box-sizing: border-box; }
    .corner svg { display: block; }
    .across { flex: 1; height: 15px; display: block; min-width: 0; }
    .rest { display: flex; flex: 1; min-height: 0; align-items: stretch; }
    .down { width: 25px; flex: none; height: auto; display: block; }
    .board { flex: 1; min-width: 0; height: auto; display: block; }
    .tick { font: 7px "Liberation Sans", Arial, sans-serif; fill: #333; }
    .name { font: 17px "Liberation Mono", "Courier New", monospace; fill: #111; text-anchor: middle; }
    .h { text-anchor: middle; }
    .v { text-anchor: end; }
  `;

  private across() {
    const out: Art[] = [];
    const step = 6.55;
    for (let k = -23; k < 260; k++) {
      const x = Math.round(229 + k * step) - 77;
      const big = k % 2 === 0;
      if (x > 3 && x < 1840) out.push(svg`<rect x=${x} y=${big ? 8 : 12} width="1" height=${big ? 7 : 3} fill=${big ? "#14146a" : "#888"}></rect>`);
    }
    for (let u = -20; u <= 320; u += 20) out.push(svg`<text class="tick h" x=${Math.round(226 + u * 5.247) - 77} y="8">${u}</text>`);
    return out;
  }

  private down() {
    const out: Art[] = [];
    for (let k = -24; k < 98; k++) {
      const y = Math.round(841 - k * 6.555) - 196;
      const big = k % 2 === 0;
      if (y > 2 && y < 810) out.push(svg`<rect x=${big ? 17 : 21} y=${y} width=${big ? 7 : 3} height="1" fill=${big ? "#14146a" : "#888"}></rect>`);
    }
    for (let u = -20; u <= 120; u += 20) out.push(svg`<text class="tick v" x="15" y=${Math.round(841 - u * 5.244) - 194}>${u}</text>`);
    return out;
  }

  render() {
    return html`
      <div class="top">
        <button class="corner" aria-label="Lock"><svg width="24" height="15"><path d="M4.500 8V4.500q0-2 2.500-2t2.500 2V8M9 7.500h9v6H9zM13 10h2v2h-2z" fill="none" stroke="#000" stroke-width="1.500"></path></svg></button>
        <button class="corner" aria-label="Units"><svg width="24" height="15"><path d="M2 8.500h20M7.500 4.500h10v7h-10zM9 14L16 2" fill="none" stroke="#000"></path></svg></button>
        <button class="corner" aria-label="Circle"><svg width="24" height="15"><circle cx="12" cy="8" r="5" fill="none" stroke="#000"></circle></svg></button>
        <svg class="across">${this.across()}</svg>
      </div>
      <div class="rest">
        <svg class="down">${this.down()}<rect x="24" width="1" height="100%" fill="#000"></rect></svg>
        <svg class="board">
          <g transform="translate(-27 -196)">
            <g shape-rendering="crispEdges">
              <g transform="translate(210 490) scale(.333333)">${body(BACK)}</g>
              <g transform="translate(600 490) scale(.333333)">${body(FRONT)}</g>
              <g transform="translate(980 570) scale(.333333)">${sleeve()}</g>
              <g transform="translate(1290 610) scale(.333333)">${pocket()}</g>
              <g transform="translate(1450 320) scale(.333333 .344)">${bands()}</g>
            </g>
            ${grain(336, 431, 705, 383)}${grain(747, 832, 631, 789)}${grain(1086, 1173, 685, 1130)}${grain(1345, 1386, 764, 1366)}
            ${grain(1483, 1523, 632, 1503)}${grain(1594, 1630, 796, 1612)}${grain(1683, 1695, 696, 1690)}
            ${NAMES.map(([n, x, y]) => svg`<text class="name" x=${x} y=${y}>${n}</text>`)}
          </g>
        </svg>
      </div>
    `;
  }
}

@customElement("status-line")
export class StatusLine extends LitElement {
  @property({ attribute: false }) cells: [string, number, string][] = [];
  static styles = css`
    :host { display: flex; gap: 2px; background: #f0f0f0; border-top: 1px solid #ddd; padding: 3px 0 0; font: 13px "Liberation Sans", Arial, sans-serif; }
    .cell { box-sizing: border-box; height: 20px; line-height: 18px; border-top: 1px solid #a0a0a0; border-left: 1px solid #b0b0b0; border-right: 1px solid #fff; white-space: pre; min-width: 0; flex: 1 1 0; overflow: hidden; color: #111; }
    .blue { color: #2458e0; }
    .green { color: #3c6a14; }
    .red { color: #a81020; }
  `;
  render() {
    return this.cells.map(([t, w, c]) => html`<span class="cell ${c}" style="flex-grow:${w}">${t}</span>`);
  }
}

const CELLS: [string, number, string][] = [
  ["MC: Default", 165, ""], ["Point", 87, ""], ["MG: 1", 226, "blue"], ["P: E901SLV", 217, ""], ["Proportional", 114, "green"], ["Dynamic", 87, "red"],
  ["Connect: Yes", 130, "red"], ["2.5 cm", 73, "red"], ["Ruler: 0 cm", 163, ""], ["(-33.79,8.59)  D:34.87  Deg:165.7", 310, ""], ["M", 141, ""], ["S (M) L XL XXL", 185, ""],
];
const MENUS = ["File", "Edit", "Grading", "PDS", "Size", "View", "Notch/Seam", "Curves", "Style", "Tools", "Settings", "Help"];

@customElement("app-root")
export class AppRoot extends LitElement {
  static styles = css`
    :host { display: flex; flex-direction: column; min-height: 100vh; background: #fff; font: 14px "Open Sans", "Noto Sans", sans-serif; color: #111; }
    .title { display: flex; height: 29px; align-items: center; padding-left: 2px; }
    .logo { flex: none; margin-right: 5px; }
    .caption { flex: 1; white-space: nowrap; }
    .filter { display: flex; align-items: center; align-self: flex-start; gap: 6px; height: 24px; box-sizing: border-box; padding: 4px 3px 0 7px; background: #f0f0f0; border: solid #888; border-width: 0 1px 2px 0; margin-right: 132px; font-size: 13px; }
    .shut { width: 14px; height: 14px; padding: 0; border: 1px solid; border-color: #fff #888 #888 #fff; background: #f0f0f0; font: 10px/10px "Liberation Sans", sans-serif; color: #666; }
    .win { width: 58px; height: 28px; padding: 0; border: 0; background: none; display: grid; place-items: center; }
    .win:last-child { margin-right: 3px; }
    .menu { display: flex; height: 26px; align-items: center; border-bottom: 1px solid #a0a0a0; box-sizing: border-box; }
    .menu a { color: #111; text-decoration: none; padding: 0 8px 0 7px; }
    drawing-board { flex: 1; }
    .dock { height: 4px; background: #2b2b2b; padding-left: 498px; }
    .dock span { display: block; width: 61px; height: 4px; background: #555; }
  `;
  render() {
    return html`
      <header class="title">
        <svg class="logo" width="20" height="20" viewBox="0 0 20 20"><path d="M2 2v15h14z" fill="#f6ee22" stroke="#222"></path><path d="M5 4l12 13M17 4L6 15" stroke="#222" stroke-width="2"></path><path d="M8 7l6 6" stroke="#ccc" stroke-width="3"></path><path d="M11 3q6-3 5 5" stroke="#d22" stroke-width="3" fill="none"></path><circle cx="17" cy="16" r="2" fill="#f6ee22" stroke="#222"></circle></svg>
        <span class="caption">E901 COMFY SWEAT BASE SIZE.sty - d:\\evaluations for style cad\\ - StyleCAD V12</span>
        <div class="filter">
          <svg width="10" height="10"><path d="M1 5h8M3 3h4M3 7h4" stroke="#223366" fill="none"></path></svg>View Filter<button class="shut" aria-label="Close filter">x</button>
        </div>
        <button class="win" aria-label="Minimize"><svg width="14" height="14"><path d="M1 7.500h12" stroke="#000"></path></svg></button>
        <button class="win" aria-label="Restore"><svg width="14" height="14"><path d="M1.500 3.500h9v9h-9zM3.500 3V1.500h9v9H11" stroke="#000" fill="none"></path></svg></button>
        <button class="win" aria-label="Close"><svg width="14" height="14"><path d="M1 1l12 12M13 1L1 13" stroke="#000"></path></svg></button>
      </header>
      <nav class="menu">${MENUS.map((m) => html`<a href="#">${m}</a>`)}</nav>
      <tool-rows></tool-rows>
      <drawing-board></drawing-board>
      <status-line .cells=${CELLS}></status-line>
      <div class="dock"><span></span></div>
    `;
  }
}
